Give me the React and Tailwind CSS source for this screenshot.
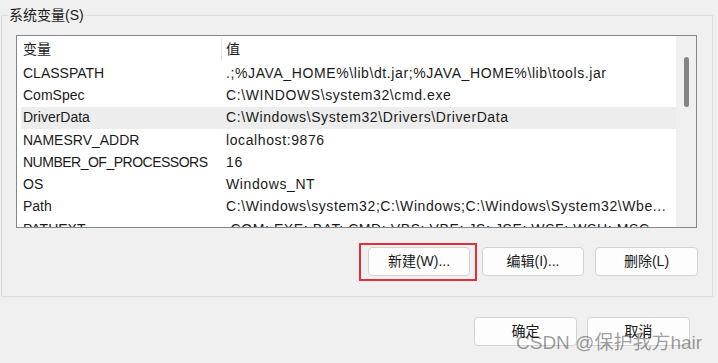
import React from "react";

const rows = [
  ["CLASSPATH", ".;%JAVA_HOME%\\lib\\dt.jar;%JAVA_HOME%\\lib\\tools.jar"],
  ["ComSpec", "C:\\WINDOWS\\system32\\cmd.exe"],
  ["DriverData", "C:\\Windows\\System32\\Drivers\\DriverData", true],
  ["NAMESRV_ADDR", "localhost:9876"],
  ["NUMBER_OF_PROCESSORS", "16"],
  ["OS", "Windows_NT"],
  ["Path", "C:\\Windows\\system32;C:\\Windows;C:\\Windows\\System32\\Wbe..."],
  ["PATHEXT", ".COM;.EXE;.BAT;.CMD;.VBS;.VBE;.JS;.JSE;.WSF;.WSH;.MSC"],
];

function Btn({ children, className = "" }) {
  return (
    <button
      className={
        "h-[29px] bg-[#fdfdfd] border border-[#d3d3d3] rounded-[4px] text-[14px] text-[#1a1a1a] flex items-center justify-center " +
        className
      }
    >
      {children}
    </button>
  );
}

export default function App() {
  return (
    <div className="relative w-[718px] h-[363px] overflow-hidden bg-[#f0f0f0] font-['Liberation_Sans','Noto_Sans_CJK_SC',sans-serif] text-[14px] text-[#1a1a1a]">
      <div className="relative ml-[1px] mt-[15px] w-[712px] h-[282px] border border-[#dcdcdc] pt-[19px] pl-[14px]">
        <div className="absolute left-[6px] -top-[10px] px-[1px] bg-[#f0f0f0] leading-[18px] text-[14px]">
          系统变量(S)
        </div>
        <div className="flex w-[681px] h-[193px] border border-[#828790] bg-white">
          <div className="flex-1 overflow-hidden pl-[4px]">
            <div className="flex items-center h-[26px]">
              <div className="w-[200px] pl-[2px] leading-[18px]">变量</div>
              <div className="w-px h-[23px] bg-[#e5e5e5]" />
              <div className="pl-[4px] leading-[18px]">值</div>
            </div>
            {rows.map(([k, v, sel]) => (
              <div
                key={k}
                className={
                  "flex items-center h-[22.3px] " + (sel ? "bg-[#ededed]" : "")
                }
              >
                <div
                  className={
                    "w-[200px] pl-[2px] whitespace-nowrap " +
                    (k === "NUMBER_OF_PROCESSORS" ? "tracking-[-0.5px]" : "")
                  }
                >
                  {k}
                </div>
                <div className="pl-[5px] w-[451px] whitespace-nowrap overflow-hidden tracking-[0.6px]">
                  {v}
                </div>
              </div>
            ))}
          </div>
          <div className="w-[20px] bg-[#f0f0f0] pt-[21px] flex justify-center">
            <div className="w-[5px] h-[50px] rounded-full bg-[#858585]" />
          </div>
        </div>
        <div className="flex justify-end pr-[14px] mt-[19px]">
          <div className="relative">
            <div className="absolute -left-[9px] -top-[4px] -right-[7px] -bottom-[5px] border-2 border-[#e0303a]" />
            <Btn className="w-[102px] relative">新建(W)...</Btn>
          </div>
          <Btn className="w-[102px] ml-[12px]">编辑(I)...</Btn>
          <Btn className="w-[103px] ml-[11px]">删除(L)</Btn>
        </div>
      </div>
      <div className="flex justify-end pr-[28px] mt-[20px] gap-[10px]">
        <Btn className="w-[103px]">确定</Btn>
        <Btn className="w-[103px]">取消</Btn>
      </div>
      <div className="absolute left-[516px] top-[331px] text-[19px] leading-[24px] text-black/40 whitespace-nowrap">
        CSDN @保护我方hair
      </div>
    </div>
  );
}
